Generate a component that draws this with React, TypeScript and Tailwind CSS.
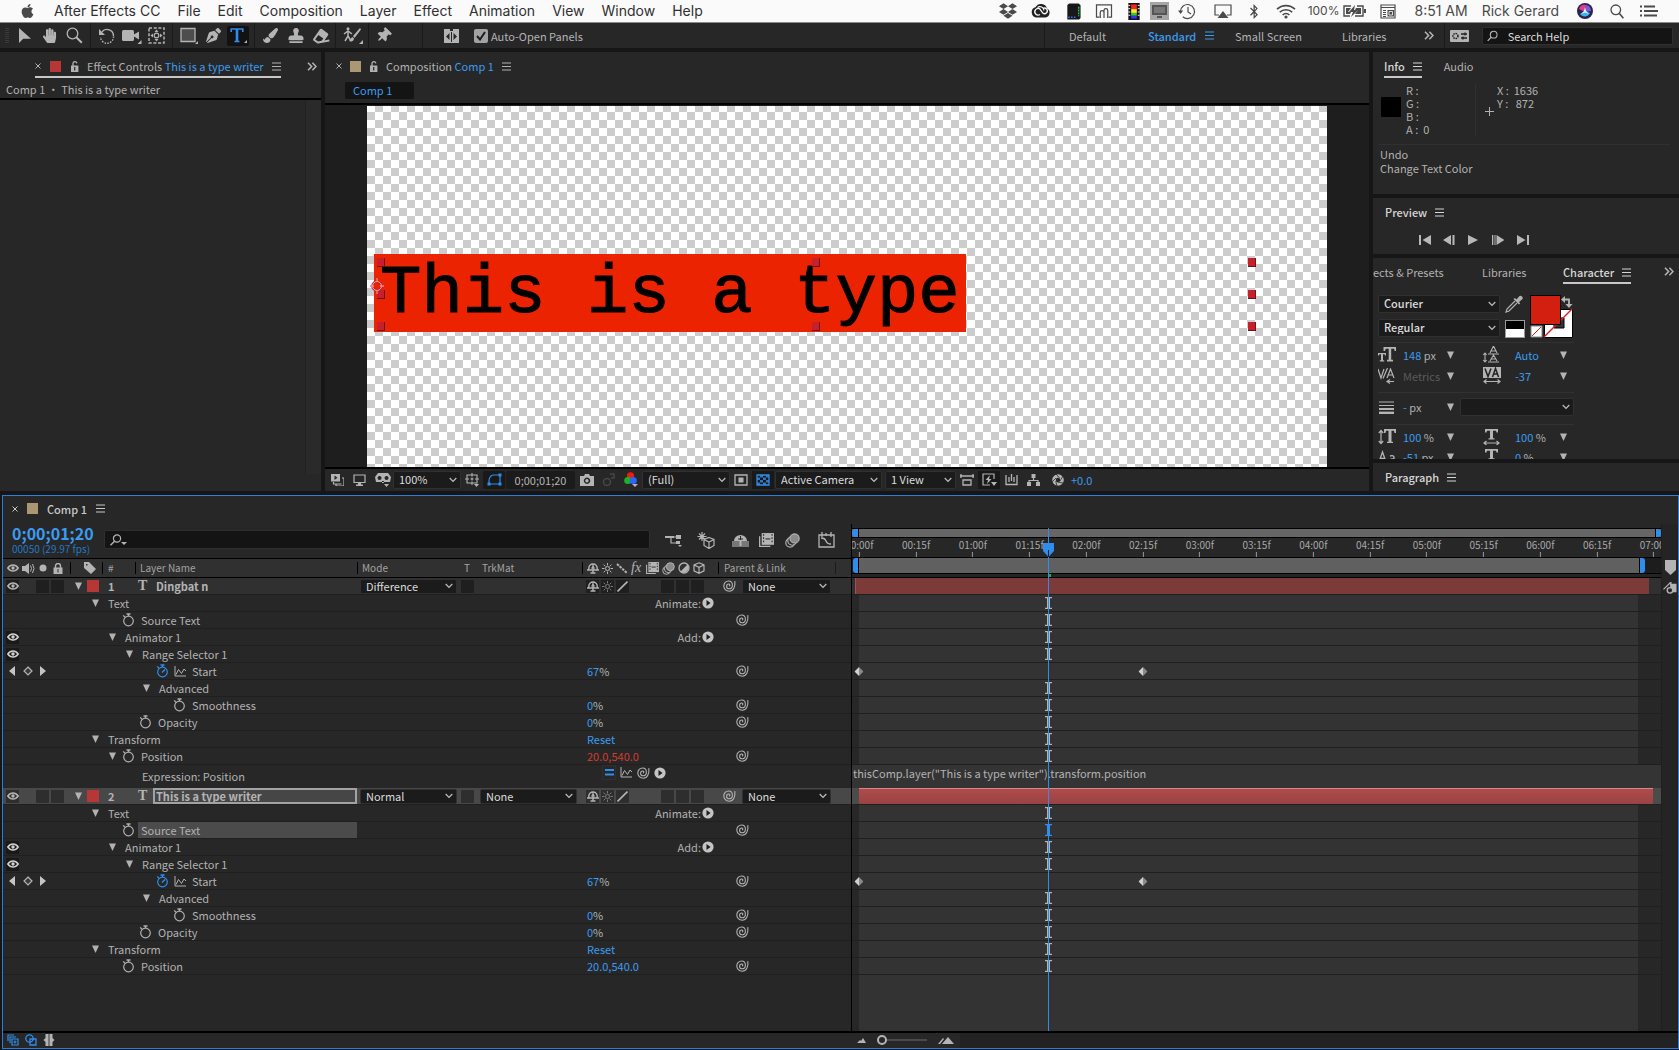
import { useState } from "react";
import type { ReactNode } from "react";
import clsx from "clsx";
import {
  FaApple,
  FaBluetoothB,
  FaDropbox,
  FaEraser,
  FaHandPaper,
  FaPaintBrush,
  FaPenNib,
  FaStamp,
  FaThumbtack,
} from "react-icons/fa";

type IconProps = { className?: string };

type Property = {
  name: string;
  level: number;
  open?: boolean;
  watch?: "off" | "on";
  eye?: boolean;
  value?: string;
  unit?: string;
  action?: string;
  pickWhip?: boolean;
  selected?: boolean;
  expression?: boolean;
  expressionRow?: boolean;
  beam?: boolean;
  keys?: number[];
};

const menus = [
  "File",
  "Edit",
  "Composition",
  "Layer",
  "Effect",
  "Animation",
  "View",
  "Window",
  "Help",
];

const baseProperties: Property[] = [
  { name: "Text", level: 0, open: true, action: "Animate:", beam: true },
  { name: "Source Text", level: 1, watch: "off", pickWhip: true, beam: true },
  { name: "Animator 1", level: 1, open: true, eye: true, action: "Add:", beam: true },
  { name: "Range Selector 1", level: 2, open: true, eye: true, beam: true },
  { name: "Start", level: 3, watch: "on", value: "67", unit: "%", pickWhip: true, keys: [0, 2.5] },
  { name: "Advanced", level: 3, open: true, beam: true },
  { name: "Smoothness", level: 4, watch: "off", value: "0", unit: "%", pickWhip: true, beam: true },
  { name: "Opacity", level: 2, watch: "off", value: "0", unit: "%", pickWhip: true, beam: true },
  { name: "Transform", level: 0, open: true, value: "Reset", beam: true },
];

const firstLayer: Property[] = [
  ...baseProperties,
  { name: "Position", level: 1, open: true, watch: "off", value: "20.0,540.0", expression: true, pickWhip: true, beam: true },
  { name: "Expression: Position", level: 2, expressionRow: true },
];

const secondLayer: Property[] = [
  ...baseProperties.map((p) =>
    p.name === "Source Text" ? { ...p, selected: true } : p
  ),
  { name: "Position", level: 1, watch: "off", value: "20.0,540.0", pickWhip: true, beam: true },
];

const indents = ["pl-[19px]", "pl-[36px]", "pl-[53px]", "pl-[70px]", "pl-[87px]"];

const ticks = [
  "00:00f", "00:15f", "01:00f", "01:15f", "02:00f", "02:15f", "03:00f", "03:15f",
  "04:00f", "04:15f", "05:00f", "05:15f", "06:00f", "06:15f", "07:00f",
];

const playhead = 1.66;

// seconds -> position on the time ruler
const at = (seconds: number) => `${0.9 + seconds * 14.03}%`;

const Hamburger = ({ className }: IconProps) => (
  <svg viewBox="0 0 9 9" className={clsx("h-[9px] w-[9px] shrink-0", className)}>
    <path d="M0 1h9M0 4.5h9M0 8h9" stroke="currentColor" strokeWidth="1.2" />
  </svg>
);

const Chevron = ({ className }: IconProps) => (
  <svg viewBox="0 0 8 6" className={clsx("h-[6px] w-[8px]", className)}>
    <path d="M.7 1 4 4.4 7.3 1" fill="none" stroke="currentColor" strokeWidth="1.3" />
  </svg>
);

const DoubleChevron = () => (
  <svg viewBox="0 0 10 9" className="h-[9px] w-[10px]">
    <path d="M1 .7 4.6 4.5 1 8.3M5.4.7 9 4.5 5.4 8.3" fill="none" stroke="currentColor" strokeWidth="1.6" />
  </svg>
);

const Cross = () => (
  <svg viewBox="0 0 6 6" className="h-[6px] w-[6px]">
    <path d="m.5.5 5 5m0-5-5 5" stroke="currentColor" strokeWidth="1" />
  </svg>
);

const Down = ({ className }: IconProps) => (
  <svg viewBox="0 0 7 8" className={clsx("h-[8px] w-[7px]", className)}>
    <path d="M0 .5h7L3.5 8z" fill="currentColor" />
  </svg>
);

const Lock = () => (
  <svg viewBox="0 0 9 11" className="h-[11px] w-[9px]">
    <path d="M3 5V2.8a1.9 1.9 0 0 1 3.8-.4" fill="none" stroke="currentColor" strokeWidth="1.3" />
    <path fillRule="evenodd" d="M1 4.6h7.4V11H1zM4.1 6v3.4h1.2V6z" fill="currentColor" />
  </svg>
);

const Eye = () => (
  <svg viewBox="0 0 12 8" className="h-[8px] w-[12px]">
    <path d="M.8 4Q3 1 6 1t5.200 3Q9 7 6 7T.8 4z" fill="none" stroke="currentColor" strokeWidth="1.500" />
    <circle cx="6" cy="4" r="1.700" fill="currentColor" />
  </svg>
);

const Spiral = ({ className }: IconProps) => (
  <svg viewBox="0 0 13 12" className={clsx("h-[12px] w-[13px] shrink-0", className)}>
    <path
      d="M11.800 1.200C12.600 6.500 10.300 11.200 6.200 11.200 3 11.200.8 9 .8 6S3 1 5.600 1s3.800 1.800 3.800 4.200S7.800 8.800 6 8.800 3.600 7.600 3.600 6.200 4.600 4 5.800 4 7 5 6.400 6.400"
      fill="none"
      stroke="currentColor"
      strokeWidth="1.100"
    />
  </svg>
);

const Stopwatch = ({ on }: { on: boolean }) => (
  <svg viewBox="0 0 13 14" className={clsx("h-[14px] w-[13px]", on ? "text-[#2f8dee]" : "text-[#b0b0b0]")}>
    <circle cx="6.500" cy="8" r="4.800" fill="none" stroke="currentColor" strokeWidth="1.200" />
    <path d="M4.500 1h4M6.500 1v2M1.200 2.400l1.800 1.800" stroke="currentColor" strokeWidth="1.300" />
    {on && <path d="m6 8.600 3-3.200" stroke="currentColor" strokeWidth="1.400" />}
  </svg>
);

const Graph = () => (
  <svg viewBox="0 0 12 11" className="h-[11px] w-[12px]">
    <path d="M1 0v10h11M2 8.500l2.500-5 3 4L10 3l2 2" fill="none" stroke="currentColor" strokeWidth="1" />
  </svg>
);

const CirclePlay = () => (
  <svg viewBox="0 0 12 12" className="h-[12px] w-[12px]">
    <circle cx="6" cy="6" r="5.600" fill="#c4c4c4" />
    <path d="M4.500 3v6l4-3z" fill="#1c1c1c" />
  </svg>
);

const Shy = () => (
  <svg viewBox="0 0 12 11" className="h-[11px] w-[12px]">
    <path d="M0 7h12M6 3v7.500M3.500 10h5M1.800 7V5.200a4.200 4.200 0 0 1 8.400 0V7" fill="none" stroke="currentColor" strokeWidth="1.400" />
    <path d="M6 1v4M4 5h4" stroke="currentColor" strokeWidth="1.200" />
  </svg>
);

const Sun = ({ className }: IconProps) => (
  <svg viewBox="0 0 11 11" className={clsx("h-[11px] w-[11px]", className)}>
    <circle cx="5.500" cy="5.500" r="2" fill="none" stroke="currentColor" />
    <path d="M5.500 0v2.500m0 6V11M0 5.500h2.500m6 0H11M1.600 1.600l1.800 1.800m4.200 4.200 1.800 1.800m0-7.800L7.600 3.400M3.400 7.600 1.600 9.400" stroke="currentColor" />
  </svg>
);

const Cube = ({ className }: IconProps) => (
  <svg viewBox="0 0 12 12" className={clsx("h-[12px] w-[12px]", className)}>
    <path d="M6 .8 11 3v5.800L6 11.300 1 8.800V3zM1 3l5 2.400L11 3M6 5.400v5.900" fill="none" stroke="currentColor" strokeWidth="1.200" />
  </svg>
);

const Film = ({ className }: IconProps) => (
  <svg viewBox="0 0 14 13" className={clsx("h-[12px] w-[13px]", className)}>
    <path d="M.6 3v9.400h10" fill="none" stroke="currentColor" strokeWidth="1.200" />
    <path d="M2.500 0H14v11H2.500z" fill="currentColor" />
    <path d="M4.300 1v9M12.200 1v9" stroke="#2a2a2a" strokeWidth="1" strokeDasharray="1.500 1.500" />
    <path d="M6 5.500h4.500" stroke="#2a2a2a" strokeWidth="1" />
  </svg>
);

const Blur = ({ className }: IconProps) => (
  <svg viewBox="0 0 13 13" className={clsx("h-[13px] w-[13px]", className)}>
    <circle cx="4.500" cy="8.500" r="3.800" fill="none" stroke="currentColor" />
    <circle cx="6.200" cy="6.800" r="3.800" fill="#2f2f2f" stroke="currentColor" />
    <circle cx="8.300" cy="4.700" r="4" fill="#8a8a8a" stroke="currentColor" />
  </svg>
);

const Swatch = ({ className }: IconProps) => (
  <span className={clsx("h-[11px] w-[11px] shrink-0", className)} />
);

const Separator = ({ className }: IconProps) => (
  <span className={clsx("w-px self-stretch bg-[#1a1a1a]", className)} />
);

type DropdownProps = {
  label: string;
  value: string;
  className?: string;
};

function Dropdown({ label, value, className }: DropdownProps) {
  return (
    <span className={clsx("relative block", className)}>
      <select
        aria-label={label}
        defaultValue={value}
        className="block h-full w-full appearance-none rounded-[2px] border border-[#303030] bg-[#1b1b1b] pb-px pl-[5px] pr-5 text-[#dcdcdc] leading-[13px] outline-none"
      >
        <option value={value}>{value}</option>
      </select>
      <Chevron className="pointer-events-none absolute top-1/2 right-[4px] -translate-y-1/2 text-[#b8b8b8]" />
    </span>
  );
}

function IconButton({ label, className, children }: { label: string; className?: string; children?: ReactNode }) {
  return (
    <button type="button" aria-label={label} className={clsx("flex shrink-0 items-center justify-center", className)}>
      {children}
    </button>
  );
}

function MenuBar() {
  return (
    <header className="flex h-[23px] items-center justify-between border-b border-[#8a8a8a] bg-[#fafafa] pl-[20px] pr-[21px] font-[Inter,sans-serif] text-[14px] leading-[20px] text-[#303030]">
      <nav className="flex items-center gap-[17px]">
        <FaApple className="mr-[2px] h-[16px] w-[15px] text-[#4a4a4a]" />
        <button type="button">After Effects CC</button>
        {menus.map((menu) => (
          <button type="button" key={menu}>{menu}</button>
        ))}
      </nav>
      <div className="flex items-center gap-[14px] text-[#4a4a4a]">
        <FaDropbox className="h-[18px] w-[18px]" />
        <svg viewBox="0 0 20 16" className="h-[16px] w-[20px]">
          <path d="M6 14.500A5.200 5.200 0 0 1 4.500 4.300 6.200 6.200 0 0 1 16 5.500a4.800 4.800 0 0 1-1.500 9z" fill="#222" />
          <path d="M9 11.500a3.300 3.300 0 1 1-.2-5.600l3 4.200a2.800 2.800 0 1 0 .2-4.600" fill="none" stroke="#fff" strokeWidth="1.300" />
          <path d="M6.500 4.500a4 4 0 0 1 6.500 3" fill="none" stroke="#fff" strokeWidth="1.100" />
        </svg>
        <svg viewBox="0 0 16 18" className="h-[17px] w-[16px]">
          <path d="M2 2 4 .5h10l2 2V16l-1.500 1.500H2z" fill="#16181a" />
          <path d="M3 15h1.500M6 15h1.500M9 15h1.500" stroke="#3c7bff" strokeWidth="1.500" />
          <path d="M14 4v10" stroke="#39c53c" strokeWidth="1.500" strokeDasharray="2 1" />
        </svg>
        <svg viewBox="0 0 18 16" className="h-[15px] w-[18px]">
          <path d="M4 14H1V1h16v13h-3M5 15V9a2 2 0 0 1 4 0v6m0-6V7a2 2 0 0 1 4 0v8" fill="none" stroke="currentColor" strokeWidth="1.300" />
        </svg>
        <svg viewBox="0 0 14 18" className="h-[17px] w-[14px]">
          <path d="M1 0h12v18H1z" fill="#111" />
          <path d="M1 2.500h2M1 6h2M1 9.500h2M1 13h2M11 2.500h2M11 6h2M11 9.500h2M11 13h2" stroke="#fff" />
          <path d="M4 1.500h6v5H4z" fill="#f22" />
          <path d="M4 6.500h6v4H4z" fill="#fe2" />
          <path d="M4 10.500h6v3H4z" fill="#3c3" />
          <path d="M4 13.500h6v3H4z" fill="#33f" />
        </svg>
        <span className="-mx-[5px] flex h-[18px] w-[19px] items-center justify-center bg-[#a5a5a5]">
          <svg viewBox="0 0 15 13" className="h-[13px] w-[15px]">
            <path d="M0 0h15v10H0zM5 11h5v2H5z" fill="#555" />
            <path d="M2 2h11v6H2z" fill="#777" />
          </svg>
        </span>
        <svg viewBox="0 0 18 17" className="h-[17px] w-[18px]">
          <path d="M2.500 8.500a7 7 0 1 1 2.300 5.200M10 4v5l3 2" fill="none" stroke="currentColor" strokeWidth="1.200" />
          <path d="M0 7.500h5.200L2.600 11z" fill="currentColor" />
        </svg>
        <svg viewBox="0 0 18 15" className="ml-[4px] h-[15px] w-[18px]">
          <path d="M5 11H1V1h16v10h-4" fill="none" stroke="currentColor" strokeWidth="1.200" />
          <path d="m9 7 5.500 7h-11z" fill="currentColor" />
        </svg>
        <FaBluetoothB className="h-[15px] w-[16px]" />
        <svg viewBox="0 0 20 15" className="h-[15px] w-[20px]">
          <path d="M1 5.200a13 13 0 0 1 18 0M3.800 8.200a9 9 0 0 1 12.400 0M6.600 11a5 5 0 0 1 6.800 0" fill="none" stroke="currentColor" strokeWidth="1.600" />
          <circle cx="10" cy="13" r="1.600" fill="currentColor" />
        </svg>
        <span className="-ml-[2px] flex items-center gap-[4px] text-[12px]">
          100%
          <svg viewBox="0 0 23 12" className="h-[12px] w-[23px]">
            <path d="M8 1H1v10h6m5 0h8V1h-6" fill="none" stroke="currentColor" strokeWidth="1.400" />
            <path d="M3 3h5l-3 4h3l-1 2H3zm10 0h5v6h-6l3-4h-3zM21 4h2v4h-2zM12 0 6 7h4L8 12l7-7h-4z" fill="currentColor" />
          </svg>
        </span>
        <svg viewBox="0 0 16 15" className="h-[15px] w-[16px]">
          <path d="M1 1h14v13H1zM1 3.500h14" fill="none" stroke="currentColor" strokeWidth="1.200" />
          <path d="M3 6h3v1H3zm0 2h3v1H3zm0 2h3v1H3zm0 2h3v1H3zm4.500-6H14v6.500H7.500z" fill="currentColor" />
          <path d="M9 7.500h3.500V11H9z" fill="none" stroke="#fff" strokeWidth=".8" />
        </svg>
        <span className="ml-[4px]">8:51 AM</span>
        <span>Rick Gerard</span>
        <svg viewBox="0 0 16 16" className="ml-[4px] h-[16px] w-[16px]">
          <circle cx="8" cy="8" r="8" fill="#2b2350" />
          <path d="M2 6a6.200 6.200 0 0 1 7-4L8 9z" fill="#e13c8d" />
          <path d="M9 2a6.200 6.200 0 0 1 5 6L8 9z" fill="#7d5bd8" />
          <path d="M3 11c2 3.500 8 3.500 10-1L8 8z" fill="#35b5e8" />
          <path d="m8 4 1 4 3 3-4-1.500L4 11l3-3z" fill="#e8f4ff" />
        </svg>
        <svg viewBox="0 0 14 15" className="ml-[3px] h-[15px] w-[14px]">
          <circle cx="5.800" cy="5.800" r="4.800" fill="none" stroke="currentColor" strokeWidth="1.300" />
          <path d="m9.200 9.200 4.200 5" stroke="currentColor" strokeWidth="1.600" />
        </svg>
        <svg viewBox="0 0 18 12" className="ml-[2px] h-[12px] w-[18px]">
          <path d="M0 1.500h2M4 1.500h11M0 6h2M4 6h14M0 10.500h2M4 10.500h13" stroke="currentColor" strokeWidth="1.800" />
        </svg>
      </div>
    </header>
  );
}

function ToolBar() {
  const [autoOpen, setAutoOpen] = useState(true);

  return (
    <div className="flex h-[25px] items-center justify-between bg-[#272727] pl-[5px] pr-[6px] text-[#b4b4b4]">
      <div className="flex h-full items-center">
        <span className="h-[16px] w-[4px] bg-[repeating-linear-gradient(#3c3c3c_0_1px,#232323_1px_2px)]" />
        <div className="ml-[3px] flex items-center">
          <IconButton label="Selection" className="w-[25px]">
            <svg viewBox="0 0 13 15" className="h-[15px] w-[13px]">
              <path d="M1 0v15l4.200-4.300H13z" fill="currentColor" />
            </svg>
          </IconButton>
          <IconButton label="Hand" className="w-[25px]"><FaHandPaper className="h-[15px] w-[15px]" /></IconButton>
          <IconButton label="Zoom" className="w-[25px]">
            <svg viewBox="0 0 17 17" className="h-[17px] w-[17px]">
              <circle cx="6.500" cy="6.500" r="5.300" fill="none" stroke="currentColor" strokeWidth="1.300" />
              <path d="m10.300 10.300 5.500 5.500" stroke="currentColor" strokeWidth="2" />
            </svg>
          </IconButton>
        </div>
        <Separator className="mx-[3px]" />
        <div className="flex items-center">
          <IconButton label="Rotation" className="w-[25px]">
            <svg viewBox="0 0 16 16" className="h-[16px] w-[16px]">
              <path d="M3 3.800A6.500 6.500 0 0 1 14.500 8" fill="none" stroke="currentColor" strokeWidth="1.400" />
              <path d="M14.500 8.500a6.500 6.500 0 0 1-13 .5" fill="none" stroke="currentColor" strokeWidth="1.400" strokeDasharray="1.500 1.300" />
              <path d="M0 1v6h6z" fill="currentColor" />
            </svg>
          </IconButton>
          <IconButton label="Unified Camera" className="w-[25px]">
            <svg viewBox="0 0 20 16" className="h-[16px] w-[20px]">
              <rect x="0" y="2" width="12" height="11" rx="1.500" fill="currentColor" />
              <path d="m11 7 6-3.500v8L11 8zM19.500 12v4h-4z" fill="currentColor" />
            </svg>
          </IconButton>
          <IconButton label="Pan Behind" className="w-[25px]">
            <svg viewBox="0 0 17 17" className="h-[17px] w-[17px]">
              <rect x="1" y="1" width="15" height="15" fill="none" stroke="currentColor" strokeWidth="1.500" strokeDasharray="3 1.700" />
              <circle cx="8.500" cy="8.500" r="2.300" fill="none" stroke="currentColor" strokeWidth="1.200" />
              <path d="M8.500 2.500 10.500 5h-4zM8.500 14.500l2-2.500h-4zM2.500 8.500 5 6.500v4zM14.500 8.500 12 6.500v4z" fill="currentColor" />
            </svg>
          </IconButton>
        </div>
        <Separator className="mx-[3px]" />
        <div className="flex items-center">
          <IconButton label="Rectangle" className="w-[25px]">
            <svg viewBox="0 0 18 17" className="h-[17px] w-[18px]">
              <path d="M1 1.500h14v13H1z" fill="#4d4d4d" stroke="currentColor" strokeWidth="1.300" />
              <path d="M18 14v3h-3z" fill="currentColor" />
            </svg>
          </IconButton>
          <IconButton label="Pen" className="w-[25px]"><FaPenNib className="h-[15px] w-[15px]" /></IconButton>
          <IconButton label="Type" className="ml-px h-[20px] w-[22px] rounded-[2px] bg-[#121212] text-[#2f8dee]">
            <svg viewBox="0 0 18 17" className="h-[17px] w-[18px]">
              <path d="M1.500 2h13M2.200 2v3M13.800 2v3M5.500 14.500h5" stroke="currentColor" strokeWidth="1.600" />
              <path d="M8 2v12.500" stroke="currentColor" strokeWidth="2.600" />
              <path d="M18 13v3h-3z" fill="#b4b4b4" />
            </svg>
          </IconButton>
        </div>
        <Separator className="mr-[3px] ml-[5px]" />
        <div className="flex items-center">
          <IconButton label="Brush" className="w-[25px]"><FaPaintBrush className="h-[15px] w-[15px]" /></IconButton>
          <IconButton label="Clone Stamp" className="w-[25px]"><FaStamp className="h-[15px] w-[16px]" /></IconButton>
          <IconButton label="Eraser" className="w-[25px]"><FaEraser className="h-[16px] w-[17px] -rotate-[10deg]" /></IconButton>
        </div>
        <Separator className="mr-[4px] ml-[2px]" />
        <IconButton label="Roto Brush" className="w-[26px]">
          <svg viewBox="0 0 20 17" className="h-[17px] w-[20px]">
            <path d="M1 7 5 4l4 3M5 4v5l3 5M5 9l-3 5" fill="none" stroke="currentColor" strokeWidth="1.500" />
            <circle cx="5" cy="1.800" r="1.500" fill="currentColor" />
            <path d="m17 1-7 8 1.500 2L18 2.500zM9.500 10c-2 .5-1.500 3-3.500 4 2 1 5 .5 5-2.500zM20 13v4h-4z" fill="currentColor" />
          </svg>
        </IconButton>
        <Separator className="mx-[2px]" />
        <IconButton label="Puppet Pin" className="w-[24px]"><FaThumbtack className="h-[15px] w-[15px] rotate-45" /></IconButton>
        <Separator className="mr-[21px] ml-[27px]" />
        <IconButton label="Snapping" className="w-[15px]">
          <svg viewBox="0 0 15 15" className="h-[15px] w-[15px]">
            <path fillRule="evenodd" d="M0 1h6v2h3V1h6v14H0zM5.500 5 2 8.500 5.500 12zM9.500 5v7L13 8.500zM7 4v10h1V4z" fill="currentColor" />
          </svg>
        </IconButton>
        <label className="relative ml-[15px] flex items-center gap-[3px]">
          <input
            type="checkbox"
            checked={autoOpen}
            onChange={(e) => setAutoOpen(e.target.checked)}
            className="h-[14px] w-[14px] appearance-none rounded-[2px] bg-[#a2a2a2]"
          />
          {autoOpen && (
            <svg viewBox="0 0 10 10" className="pointer-events-none absolute left-[2px] h-[10px] w-[10px]">
              <path d="m1 5 3 3.500L9 1" fill="none" stroke="#1d1d1d" strokeWidth="2" />
            </svg>
          )}
          Auto-Open Panels
        </label>
      </div>

      <div className="flex h-full items-center">
        <Separator />
        <button type="button" className="ml-[24px] w-[79px] text-left">Default</button>
        <button type="button" className="flex w-[87px] items-center gap-[9px] font-medium text-[#3b9cf0]">
          Standard
          <Hamburger />
        </button>
        <button type="button" className="w-[107px] text-left">Small Screen</button>
        <button type="button" className="w-[82px] text-left">Libraries</button>
        <IconButton label="More workspaces"><DoubleChevron /></IconButton>
        <Separator className="mr-[5px] ml-[10px]" />
        <IconButton label="Workspace settings">
          <svg viewBox="0 0 19 12" className="h-[12px] w-[19px]">
            <rect width="19" height="12" rx="1" fill="currentColor" />
            <circle cx="5.500" cy="6" r="2.500" fill="none" stroke="#222" strokeWidth="1.500" strokeDasharray="1.500 .8" />
            <path d="M11 4h6M11 8h6M15 2.500v3M13 6.500v3" stroke="#222" strokeWidth="1.300" />
          </svg>
        </IconButton>
        <label className="ml-[13px] flex h-[18px] w-[191px] items-center rounded-[2px] border border-[#303030] bg-[#141414] pl-[4px]">
          <svg viewBox="0 0 12 12" className="h-[12px] w-[12px]">
            <circle cx="7.500" cy="4.500" r="3.800" fill="none" stroke="currentColor" strokeWidth="1.200" />
            <path d="M4.800 7.300.8 11.500" stroke="currentColor" strokeWidth="1.500" />
          </svg>
          <input
            aria-label="Search Help"
            placeholder="Search Help"
            className="ml-[10px] w-full bg-transparent text-[#dcdcdc] outline-none placeholder:text-[#dcdcdc]"
          />
        </label>
      </div>
    </div>
  );
}

function EffectControls() {
  return (
    <section className="flex w-[321px] shrink-0 flex-col bg-[#272727]">
      <div className="flex h-[29px] items-start justify-between pr-[4px] pl-[35px]">
        <div className="flex h-[26px] items-center gap-[8px] border-b-2 border-[#c8c8c8] pt-[4px]">
          <span className="flex items-center gap-[9px]">
            <Cross />
            <Swatch className="bg-[#b73636]" />
            <Lock />
          </span>
          <h2 className="whitespace-nowrap">
            Effect Controls <span className="text-[#3b9cf0]">This is a type writer</span>
          </h2>
          <Hamburger />
        </div>
        <span className="mt-[10px]"><DoubleChevron /></span>
      </div>
      <p className="h-[19px] border-b-2 border-black pl-[6px] leading-[17px]">Comp 1 • This is a type writer</p>
      <div className="flex flex-1 justify-end pb-[17px]">
        <div className="w-[16px] border-l border-[#222] bg-[#2a2a2a]" />
      </div>
    </section>
  );
}

function Handle({ className }: IconProps) {
  return <span className={clsx("absolute h-[9px] w-[8px] border-r border-b border-[#6e1414] bg-[#c6202f]", className)} />;
}

function Composition() {
  return (
    <section className="flex min-w-0 flex-1 flex-col bg-[#272727]">
      <div className="flex h-[28px] items-center gap-[8px] pl-[11px]">
        <Cross />
        <Swatch className="bg-[#ab9873]" />
        <Lock />
        <h2>
          Composition <span className="text-[#3b9cf0]">Comp 1</span>
        </h2>
        <Hamburger />
      </div>
      <div className="flex h-[25px] items-center border-b-2 border-black pb-[2px] pl-[20px]">
        <button type="button" className="h-[17px] w-[69px] rounded-[2px] bg-[#141414] pl-[8px] text-left leading-[15px] text-[#3b9cf0]">
          Comp 1
        </button>
      </div>
      <div className="flex h-[362px] justify-center overflow-hidden bg-[#1e1e1e] pt-px">
        <div className="relative w-[960px] bg-[conic-gradient(#ccc_25%,#fff_0_50%,#ccc_0_75%,#fff_0)] bg-[length:16px_16px] bg-[position:0_-2px]">
          <div className="absolute top-[148px] left-[7px] h-[78px] w-[592px] bg-[#eb2300] pl-[6px] font-['Liberation_Mono',monospace] text-[69px] leading-[81px] whitespace-pre text-black [-webkit-text-stroke:1px_black]">
            This is a type
          </div>
          <Handle className="top-[152px] left-[10px]" />
          <Handle className="top-[184px] left-[10px]" />
          <Handle className="top-[216px] left-[10px]" />
          <Handle className="top-[152px] left-[445px]" />
          <Handle className="top-[216px] left-[445px]" />
          <Handle className="top-[152px] left-[881px]" />
          <Handle className="top-[184px] left-[881px]" />
          <Handle className="top-[216px] left-[881px]" />
          <svg viewBox="0 0 16 18" className="absolute top-[171px] left-[2px] h-[18px] w-[16px]">
            <circle cx="8" cy="9" r="4.500" fill="none" stroke="#c6202f" strokeWidth="2.500" />
            <circle cx="8" cy="9" r="4.500" fill="none" stroke="#f2b0b0" />
            <path d="M8 1v4M8 13v4M1 9h4M11 9h4" stroke="#e88" strokeWidth="1.300" />
          </svg>
        </div>
      </div>
      <div className="flex h-[24px] items-center border-t-2 border-black pb-px pl-[6px] text-[#b4b4b4]">
        <IconButton label="Always preview" className="w-[22px] justify-start">
          <svg viewBox="0 0 13 12" className="h-[12px] w-[13px]">
            <path d="M2.500 8v2h8M5 10v2h8V4h-2" fill="none" stroke="currentColor" strokeWidth="1.200" />
            <path fillRule="evenodd" d="M0 0h9v7.500H0zM3.500 1.500v4.500l3-2.200z" fill="currentColor" />
          </svg>
        </IconButton>
        <IconButton label="Main view" className="w-[22px] justify-start">
          <svg viewBox="0 0 13 12" className="h-[12px] w-[13px]">
            <path d="M1 1h11v7.500H1z" fill="none" stroke="currentColor" strokeWidth="1.200" />
            <path d="M5 9h3v1.500h2V12H3v-1.500h2z" fill="currentColor" />
          </svg>
        </IconButton>
        <IconButton label="Immersive" className="w-[18px] justify-start">
          <svg viewBox="0 0 16 14" className="h-[14px] w-[16px]">
            <path fillRule="evenodd" d="M3 0h10l3 4-1 5H1L0 4zM4.500 3a2 2 0 1 0 .1 0zM11.500 3a2 2 0 1 0 .1 0zM7 8h2v2H7z" fill="currentColor" />
            <path d="M9 11h5l-2.500 3z" fill="currentColor" />
          </svg>
        </IconButton>
        <Dropdown label="Magnification" value="100%" className="h-[18px] w-[68px]" />
        <IconButton label="Grid and guides" className="w-[22px]">
          <svg viewBox="0 0 15 14" className="h-[14px] w-[15px]">
            <path d="M2 2h10v8H2zM7 0v3.500M7 8.500V12M0 6h4M10 6h4M5.500 6h3M7 4.500v3" fill="none" stroke="currentColor" strokeWidth="1.100" />
            <path d="M9 11h5l-2.500 3z" fill="currentColor" />
          </svg>
        </IconButton>
        <IconButton label="Mask visibility" className="h-[18px] w-[22px] rounded-[2px] bg-[#191919] text-[#2f8dee]">
          <svg viewBox="0 0 15 13" className="h-[13px] w-[15px]">
            <path d="M2 11V7q1-5 5-5h6v9z" fill="none" stroke="currentColor" strokeWidth="1.200" />
            <path d="M.5 9.500h3v3h-3zM11.500 9.500h3v3h-3zM11.500.5h3v3h-3z" fill="currentColor" />
          </svg>
        </IconButton>
        <button type="button" className="mx-px h-[18px] w-[69px] rounded-[2px] bg-[#1b1b1b]">0;00;01;20</button>
        <IconButton label="Take snapshot" className="w-[22px]">
          <svg viewBox="0 0 14 12" className="h-[12px] w-[14px]">
            <path fillRule="evenodd" d="M0 2h4l1-2h4l1 2h4v10H0zM7 3.500a3.200 3.200 0 1 0 .1 0zM7 5a1.700 1.700 0 1 1-.1 0z" fill="currentColor" />
          </svg>
        </IconButton>
        <IconButton label="Show snapshot" className="w-[22px] text-[#474747]">
          <svg viewBox="0 0 14 14" className="h-[14px] w-[14px]">
            <circle cx="5" cy="9" r="3.500" fill="none" stroke="currentColor" strokeWidth="1.500" />
            <path d="M8 1h4v4H9" fill="none" stroke="currentColor" strokeWidth="1.500" />
          </svg>
        </IconButton>
        <IconButton label="Channels" className="w-[22px]">
          <svg viewBox="0 0 14 15" className="h-[15px] w-[14px]">
            <circle cx="6.500" cy="3.800" r="3.600" fill="#f21b0c" />
            <circle cx="3.800" cy="8.500" r="3.600" fill="#19b526" />
            <circle cx="9.200" cy="8.500" r="3.600" fill="#2f62ff" />
            <path d="M8 12h6l-3 3z" fill="currentColor" />
          </svg>
        </IconButton>
        <Dropdown label="Resolution" value="(Full)" className="h-[18px] w-[88px]" />
        <IconButton label="Region of interest" className="w-[22px]">
          <svg viewBox="0 0 14 12" className="h-[12px] w-[14px]">
            <path d="M1 1h12v10H1z" fill="none" stroke="currentColor" strokeWidth="1.300" />
            <path d="M4.500 3.500h5v5h-5z" fill="currentColor" />
          </svg>
        </IconButton>
        <IconButton label="Transparency grid" className="h-[18px] w-[22px] bg-[#191919] text-[#2f8dee]">
          <svg viewBox="0 0 14 12" className="h-[12px] w-[14px]">
            <path d="M1 1h12v10H1z" fill="none" stroke="currentColor" strokeWidth="1.300" />
            <path d="M4 1h3v2.500H4zM10 1h3v2.500h-3zM1 3.500h3V6H1zM7 3.500h3V6H7zM4 6h3v2.500H4zM10 6h3v2.500h-3zM1 8.500h3V11H1zM7 8.500h3V11H7z" fill="currentColor" opacity=".8" />
          </svg>
        </IconButton>
        <Dropdown label="3D view" value="Active Camera" className="ml-px h-[18px] w-[107px]" />
        <Dropdown label="View layout" value="1 View" className="ml-[3px] h-[18px] w-[71px]" />
        <IconButton label="Pixel aspect ratio" className="w-[22px]">
          <svg viewBox="0 0 14 12" className="h-[12px] w-[14px]">
            <path d="M0 2h14M3 6h8v5H3zM1 0v4M13 0v4" fill="none" stroke="currentColor" strokeWidth="1.300" />
          </svg>
        </IconButton>
        <IconButton label="Fast previews" className="h-[18px] w-[22px] bg-[#191919]">
          <svg viewBox="0 0 15 14" className="h-[14px] w-[15px]">
            <path d="M12 6V1H1v11h7" fill="none" stroke="currentColor" strokeWidth="1.200" />
            <path d="M8 2 3.500 7H6l-1 4 4.500-5H7zM9 9h6l-3 4z" fill="currentColor" />
          </svg>
        </IconButton>
        <IconButton label="Timeline" className="w-[22px]">
          <svg viewBox="0 0 13 12" className="h-[12px] w-[13px]">
            <path d="M1 1v9.500h11V1M6.500 0v7M4 3v5M9 3v5" fill="none" stroke="currentColor" strokeWidth="1.300" />
          </svg>
        </IconButton>
        <IconButton label="Flowchart" className="w-[22px]">
          <svg viewBox="0 0 13 12" className="h-[12px] w-[13px]">
            <path d="M4.500 0h4v4h-4zM0 8h4v4H0zM9 8h4v4H9z" fill="currentColor" />
            <path d="M6.500 4v2.500M2 8V6.500h9V8" fill="none" stroke="currentColor" strokeWidth="1.200" />
          </svg>
        </IconButton>
        <IconButton label="Exposure" className="ml-[3px] w-[22px]">
          <svg viewBox="0 0 12 12" className="h-[12px] w-[12px]">
            <circle cx="6" cy="6" r="4" fill="none" stroke="currentColor" strokeWidth="3.600" />
            <path d="m4 0 3.500 4M11 2 8 7M11 9l-5.500-1M5 12 3.700 7M0 8l4-4" stroke="#272727" strokeWidth=".8" />
          </svg>
        </IconButton>
        <button type="button" className="ml-[2px] text-[#3b9cf0]">+0.0</button>
      </div>
    </section>
  );
}

function InfoPanel() {
  return (
    <section className="h-[142px] bg-[#272727]">
      <div className="flex gap-[22px] pl-[11px]">
        <button type="button" className="flex h-[26px] items-center gap-[8px] border-b-2 border-[#c8c8c8] pt-[4px] font-medium text-[#d6d6d6]">
          Info <Hamburger />
        </button>
        <button type="button" className="h-[26px] pt-[2px]">Audio</button>
      </div>
      <div className="flex h-[66px] pt-[6px] pl-[8px] leading-[13px]">
        <span className="mt-[13px] h-[20px] w-[20px] bg-black" />
        <div className="ml-[5px] h-[52px] w-[70px] border-r border-[#303030]">
          <p>R :</p>
          <p>G :</p>
          <p>B :</p>
          <p className="whitespace-pre">A :  0</p>
        </div>
        <svg viewBox="0 0 9 9" className="mt-[23px] ml-[9px] h-[9px] w-[9px]">
          <path d="M4.500 0v9M0 4.500h9" stroke="currentColor" />
        </svg>
        <div className="ml-[3px] whitespace-pre">
          <p>X :  1636</p>
          <p>Y :   872</p>
        </div>
      </div>
      <div className="mr-[9px] ml-[6px] border-t border-[#303030] pt-[2px] pl-px leading-[14px]">
        <p>Undo</p>
        <p>Change Text Color</p>
      </div>
    </section>
  );
}

function PreviewPanel() {
  return (
    <section className="h-[56px] bg-[#272727] text-[#b8b8b8]">
      <h2 className="flex h-[28px] items-center gap-[8px] pl-[12px] font-medium text-[#d6d6d6]">
        Preview <Hamburger />
      </h2>
      <div className="flex gap-[2px] pt-[9px] pl-[41px]">
        <IconButton label="First frame" className="w-[22px]">
          <svg viewBox="0 0 12 10" className="h-[10px] w-[12px]"><path d="M0 0h2v10H0zM12 0v10L3.500 5z" fill="currentColor" /></svg>
        </IconButton>
        <IconButton label="Previous frame" className="w-[22px]">
          <svg viewBox="0 0 12 10" className="h-[10px] w-[12px]"><path d="M8 0v10L0 5zM9.500 0h2v10h-2z" fill="currentColor" /></svg>
        </IconButton>
        <IconButton label="Play" className="w-[22px]">
          <svg viewBox="0 0 10 10" className="h-[10px] w-[10px]"><path d="M0 0v10l10-5z" fill="currentColor" /></svg>
        </IconButton>
        <IconButton label="Next frame" className="w-[24px]">
          <svg viewBox="0 0 12 10" className="h-[10px] w-[12px]"><path d="M0 0h1.300v10H0zM2.500 0h1v10h-1zM4.500 0v10l8-5z" fill="currentColor" /></svg>
        </IconButton>
        <IconButton label="Last frame" className="w-[22px]">
          <svg viewBox="0 0 12 10" className="h-[10px] w-[12px]"><path d="M10 0h2v10h-2zM0 0v10l8.500-5z" fill="currentColor" /></svg>
        </IconButton>
      </div>
    </section>
  );
}

function TypeIcon({ kind }: { kind: string }) {
  if (kind === "size")
    return (
      <svg viewBox="0 0 18 15" className="h-[15px] w-[18px]">
        <path d="M0 6h8v2.500H7l-.4-1.200H5v6h1.200V14.500h-4.400v-1.200H3v-6H1.400L1 8.500H0z" fill="currentColor" />
        <path d="M5.500 0H18v4h-1.300L16 1.800h-2.800v11H15v1.700H9v-1.700h1.700v-11H7.800L7 4H5.500z" fill="currentColor" />
      </svg>
    );
  if (kind === "baseline")
    return (
      <svg viewBox="0 0 17 14" className="h-[14px] w-[17px]">
        <path d="m1 12 3.500-10L8 12M2.500 8.500h4M12 6q4-1 4 1.500V12M16 9q-4-.5-4 1.500t4 0" fill="none" stroke="currentColor" strokeWidth="1.300" />
      </svg>
    );
  if (kind === "kerning")
    return (
      <svg viewBox="0 0 17 16" className="h-[16px] w-[17px]">
        <path d="m0 1 3 9 3-9M5 10.500 9.500 0M9 10l3.500-9L16 10M10.500 7h4M9.500 13.500H16M12 11.500l-3 2 3 2" fill="none" stroke="currentColor" strokeWidth="1.200" />
      </svg>
    );
  if (kind === "leading")
    return (
      <svg viewBox="0 0 17 17" className="h-[17px] w-[17px]">
        <path d="m7 7 3.500-7L14 7M8.500 5h4M5 8h11M7 15l3.500-6L14 15M8.500 13h4M5 16h11M2 7v8M.3 9 2 7l1.700 2M.3 14 2 16l1.700-2" fill="none" stroke="currentColor" strokeWidth="1.100" />
      </svg>
    );
  if (kind === "tracking")
    return (
      <svg viewBox="0 0 18 17" className="h-[17px] w-[18px]">
        <path d="M0 0h18v11H0z" fill="currentColor" />
        <path d="m2 1.500 3 8 3-8M9.500 10l3-8.500 3 8.500M10.500 7h4" fill="none" stroke="#222" strokeWidth="1.500" />
        <path d="M1 14.500h16M3.500 12.500l-2.500 2 2.500 2M14.500 12.500l2.500 2-2.500 2" fill="none" stroke="currentColor" strokeWidth="1.200" />
      </svg>
    );
  if (kind === "stroke")
    return (
      <svg viewBox="0 0 15 13" className="ml-px h-[13px] w-[15px]">
        <path d="M0 1h15M0 4.500h15" stroke="currentColor" strokeWidth="1.200" />
        <path d="M0 8h15" stroke="currentColor" strokeWidth="2" />
        <path d="M0 11.800h15" stroke="currentColor" strokeWidth="2.400" />
      </svg>
    );
  return (
    <svg viewBox="0 0 18 16" className="h-[16px] w-[18px]">
      <path
        d={
          kind === "vertical"
            ? "M3 2v12M.8 4 3 1.500 5.200 4M.8 12 3 14.500 5.200 12"
            : "M1 14h15M3.500 12 1 14l2.500 2M13.500 12l2.500 2-2.500 2"
        }
        fill="none"
        stroke="currentColor"
        strokeWidth="1.200"
      />
      {kind === "vertical" ? (
        <path d="M6 0h12v4h-1.500l-.6-2.200h-2.400v11H15V14H9v-1.200h1.500v-11H8.100L7.500 4H6z" fill="currentColor" />
      ) : (
        <path d="M2 0h13v3.500h-1.500L13 1.700h-3v7.600h1.500v1.200h-6V9.300H7V1.700H4l-.5 1.800H2z" fill="currentColor" />
      )}
    </svg>
  );
}

function CharacterRow({
  icon, value, unit, icon2, value2, unit2, className,
}: {
  icon: string; value: string; unit?: string; icon2?: string; value2?: string; unit2?: string; className?: string;
}) {
  return (
    <div className={clsx("grid grid-cols-[25px_43px_37px_32px_43px_1fr] items-center whitespace-nowrap text-[#b4b4b4]", className)}>
      <TypeIcon kind={icon} />
      <button type="button" className={clsx("text-left", value === "Metrics" ? "text-[#5a5a5a]" : "text-[#3b9cf0]")}>
        {value} {unit && <span className="text-[#b0b0b0]">{unit}</span>}
      </button>
      <Down className="ml-px" />
      {icon2 && <TypeIcon kind={icon2} />}
      {value2 && (
        <button type="button" className="text-left text-[#3b9cf0]">
          {value2} {unit2 && <span className="text-[#b0b0b0]">{unit2}</span>}
        </button>
      )}
      {value2 && <Down className="ml-[2px]" />}
    </div>
  );
}

function CharacterPanel() {
  return (
    <section className="h-[201px] overflow-hidden bg-[#272727]">
      <div className="flex h-[26px] items-start pr-[5px]">
        <button type="button" className="h-[26px] w-[109px] pt-[2px] text-left">ects &amp; Presets</button>
        <button type="button" className="h-[26px] w-[81px] pt-[2px] text-left">Libraries</button>
        <button type="button" className="flex h-[26px] items-center gap-[8px] border-b-2 border-[#c8c8c8] pt-[4px] font-medium text-[#d6d6d6]">
          Character <Hamburger />
        </button>
        <span className="mt-[9px] ml-auto"><DoubleChevron /></span>
      </div>
      <div className="mt-[11px] ml-[5px] flex h-[43px]">
        <div className="flex w-[122px] flex-col gap-[6px]">
          <Dropdown label="Font family" value="Courier" className="h-[18px] font-medium" />
          <Dropdown label="Font style" value="Regular" className="h-[18px] font-medium" />
        </div>
        <div className="ml-[5px] flex w-[20px] flex-col justify-between">
          <svg viewBox="0 0 18 18" className="h-[18px] w-[18px]">
            <path d="m10 6-8 8-1 3 3-1 8-8" fill="none" stroke="currentColor" strokeWidth="1.200" />
            <path d="m8.500 4 1.500-1 1.500 1.500L14 1.500A2 2 0 0 1 17 4.500L14 7l1.200 1.500-1.200 1z" fill="currentColor" />
          </svg>
          <span className="h-[18px] border border-[#9a9a9a] bg-[linear-gradient(#000_0_50%,#fff_50%)]" />
        </div>
        <svg viewBox="0 0 44 44" className="ml-[5px] h-[44px] w-[44px]">
          <path d="M14.500 14.500h28v28h-28z" fill="#fff" stroke="#000" />
          <path d="M24 23h10v10H24z" fill="#333" stroke="#000" />
          <path d="m14 42 28-28" stroke="#d22" strokeWidth="1.500" />
          <path d="M.5.500h30v29H.5z" fill="#d31f0f" stroke="#000" />
          <path d="M1 31h11v11H1z" fill="#fff" stroke="#888" />
          <path d="m2 41 9-9" stroke="#d22" />
          <path d="M34 4.500h5v6" fill="none" stroke="#b4b4b4" strokeWidth="1.800" />
          <path d="M31 4.500 35 1v7zM39 13l-3.500-4h7z" fill="#b4b4b4" />
        </svg>
      </div>
      <div className="ml-[5px] w-[196px]">
        <div className="mt-[4px] border-t border-[#323232] pt-px pb-[6px]">
          <CharacterRow icon="size" value="148" unit="px" icon2="leading" value2="Auto" className="h-[21px]" />
          <CharacterRow icon="kerning" value="Metrics" icon2="tracking" value2="-37" className="h-[21px]" />
        </div>
        <div className="flex border-t border-[#323232] pt-[5px] pb-[8px]">
          <CharacterRow icon="stroke" value="-" unit="px" className="h-[18px] w-[82px] shrink-0" />
          <Dropdown label="Stroke order" value="" className="h-[18px] flex-1" />
        </div>
        <div className="border-t border-[#323232] pt-[2px]">
          <CharacterRow icon="vertical" value="100" unit="%" icon2="horizontal" value2="100" unit2="%" className="h-[20px]" />
          <CharacterRow icon="baseline" value="-51" unit="px" icon2="horizontal" value2="0" unit2="%" className="h-[20px]" />
        </div>
      </div>
    </section>
  );
}

function OutlineHeader() {
  return (
    <div className="grid h-[20px] grid-cols-[67px_32px_33px_222px_101px_20px_104px_136px_1fr] items-center border-y border-black bg-[#303030] text-[10px] text-[#a2a2a2]">
      <div className="flex items-center gap-[3px] pl-[4px] text-[#b4b4b4]">
        <Eye />
        <svg viewBox="0 0 13 11" className="h-[11px] w-[13px]">
          <path d="M0 3h3l4-3v11L3 8H0z" fill="currentColor" />
          <path d="M8.500 2.500q2 3 0 6M10.500 1q3 4.500 0 9" fill="none" stroke="currentColor" />
        </svg>
        <svg viewBox="0 0 12 8" className="h-[8px] w-[12px]"><circle cx="5" cy="4" r="3.500" fill="currentColor" /></svg>
        <svg viewBox="0 0 10 11" className="h-[11px] w-[10px]">
          <path d="M2.500 5V3a2.500 2.500 0 0 1 5 0v2" fill="none" stroke="currentColor" strokeWidth="1.400" />
          <path fillRule="evenodd" d="M.5 4.500h9V11h-9zM4.500 6v3.500h1V6z" fill="currentColor" />
        </svg>
      </div>
      <div className="flex h-[12px] items-center border-l border-black pl-[12px] text-[#b4b4b4]">
        <svg viewBox="0 0 13 12" className="h-[12px] w-[13px]">
          <path fillRule="evenodd" d="M1 0h5l7 7-5 5-7-6zM3 2v1.500h1.500V2z" fill="currentColor" />
        </svg>
      </div>
      <span className="h-[12px] border-l border-black pl-[5px] leading-[12px]">#</span>
      <span className="h-[12px] border-l border-black pl-[4px] leading-[12px]">Layer Name</span>
      <span className="h-[12px] border-l border-black pl-[4px] leading-[12px]">Mode</span>
      <span className="pl-[6px] leading-[12px]">T</span>
      <span className="pl-[4px] leading-[12px]">TrkMat</span>
      <div className="flex h-[12px] items-center gap-[3px] border-l border-black pl-[4px] text-[#b4b4b4]">
        <Shy />
        <Sun />
        <svg viewBox="0 0 12 11" className="h-[11px] w-[12px]"><path d="m1 1 10 9" stroke="currentColor" strokeWidth="2" strokeDasharray="2.500 1" /></svg>
        <span className="w-[12px] font-['Liberation_Serif',serif] text-[14px] leading-[12px] italic">fx</span>
        <Film />
        <Blur />
        <svg viewBox="0 0 12 12" className="h-[12px] w-[12px]">
          <circle cx="6" cy="6" r="5" fill="none" stroke="currentColor" strokeWidth="1.300" />
          <path d="M9.500 2.500a5 5 0 0 1-7 7z" fill="currentColor" />
        </svg>
        <Cube />
      </div>
      <div className="flex h-[12px] items-center border-l border-black pl-[5px]">
        <span className="w-[111px] leading-[12px]">Parent &amp; Link</span>
        <Separator />
      </div>
    </div>
  );
}

const Cell = ({ children, className }: { children?: ReactNode; className?: string }) => (
  <span className={clsx("flex h-[13px] w-[13px] items-center justify-center bg-black/35", className)}>{children}</span>
);

function LayerRow({ index, name, mode, trackMatte, selected }: {
  index: number; name: string; mode: string; trackMatte?: string; selected?: boolean;
}) {
  return (
    <div
      className={clsx(
        "grid h-[17px] grid-cols-[67px_32px_33px_222px_101px_20px_104px_136px_1fr] items-center border-b border-[#1f1f1f] text-[#b4b4b4]",
        selected ? "bg-[#484848]" : "bg-[#303030]"
      )}
    >
      <div className="flex gap-[2px] pl-[3px]">
        <Cell><Eye /></Cell>
        <Cell className="ml-[15px]" />
        <Cell />
      </div>
      <div className="flex items-center gap-[5px] pl-[5px]">
        <Down />
        <span className="h-[12px] w-[12px] bg-[#b73636]" />
      </div>
      <span className="pl-[6px] leading-[14px] font-bold">{index}</span>
      <div className="flex h-[16px] min-w-0 items-center">
        <span className="w-[18px] shrink-0 pl-[3px] font-['Liberation_Serif',serif] text-[14px] leading-[16px] font-bold">T</span>
        {selected ? (
          <input
            aria-label="Layer name"
            defaultValue={name}
            className="h-[16px] min-w-0 flex-1 border-2 border-[#a2a2a2] bg-[#464646] pl-px leading-[12px] font-bold outline-none"
          />
        ) : (
          <span className="pl-[3px] leading-[14px] font-bold">{name}</span>
        )}
      </div>
      <Dropdown label={`${name} mode`} value={mode} className="ml-[3px] h-[15px] w-[97px]" />
      <Cell className="ml-[3px]" />
      {trackMatte ? (
        <Dropdown label={`${name} track matte`} value={trackMatte} className="ml-[2px] h-[15px] w-[97px]" />
      ) : (
        <span />
      )}
      <div className="flex gap-[2px] pl-[4px]">
        <Cell><Shy /></Cell>
        <Cell><Sun className="text-[#7a7a7a]" /></Cell>
        <Cell>
          <svg viewBox="0 0 11 11" className="h-[11px] w-[11px]"><path d="M.5 10.500 10.500.500" stroke="currentColor" strokeWidth="1.600" /></svg>
        </Cell>
        <Cell className="ml-[30px]" />
        <Cell />
        <Cell />
      </div>
      <div className="flex items-center gap-[6px] pl-[5px]">
        <Spiral />
        <Dropdown label={`${name} parent`} value="None" className="h-[15px] w-[89px]" />
      </div>
    </div>
  );
}

function PropertyRow({ item }: { item: Property }) {
  if (item.expressionRow) {
    return (
      <div className="grid h-[23px] grid-cols-[67px_287px_1fr]">
        <span />
        <span className="pt-[3px] pl-[72px]">{item.name}</span>
        <div className="flex h-[15px] items-center gap-[4px] pl-[245px]">
          <IconButton label="Enable expression" className="h-[15px] w-[14px] border border-[#303030] text-[#2f8dee]">
            <svg viewBox="0 0 9 7" className="h-[7px] w-[9px]"><path d="M0 1h9M0 5.500h9" stroke="currentColor" strokeWidth="2" /></svg>
          </IconButton>
          <IconButton label="Expression graph"><Graph /></IconButton>
          <IconButton label="Expression pick whip" className="ml-px"><Spiral /></IconButton>
          <IconButton label="Expression language"><CirclePlay /></IconButton>
        </div>
      </div>
    );
  }

  return (
    <div className="grid h-[17px] grid-cols-[67px_287px_225px_136px_1fr] items-center border-b border-[#1f1f1f] leading-[16px]">
      <div className="flex items-center pl-[3px]">
        {item.eye && <Cell className="text-[#d0d0d0]"><Eye /></Cell>}
        {item.keys && (
          <svg viewBox="0 0 38 10" className="ml-[3px] h-[10px] w-[38px]">
            <path d="M6 0v10L0 5zM31 0v10l6-5z" fill="#c4c4c4" />
            <path d="m19 1 4 4-4 4-4-4z" fill="#3a3a3a" stroke="#b4b4b4" strokeWidth="1.200" />
          </svg>
        )}
      </div>
      <div className={clsx("flex h-full items-center", indents[item.level])}>
        <span className="flex w-[12px] shrink-0 justify-center">{item.open && <Down />}</span>
        {item.watch && (
          <span className="ml-[4px] shrink-0"><Stopwatch on={item.watch === "on"} /></span>
        )}
        {item.watch === "on" && <span className="ml-[5px] shrink-0"><Graph /></span>}
        <span
          className={clsx(
            "whitespace-nowrap",
            item.watch ? "ml-[3px] pl-[3px]" : "ml-[4px] pl-[3px]",
            item.selected && "flex-1 self-stretch bg-[#4b4b4b]"
          )}
        >
          {item.name}
        </span>
      </div>
      <span />
      <div className="flex items-center pl-[5px]">
        {item.value && (
          <button type="button" className={item.expression ? "text-[#d33c32]" : "text-[#3b9cf0]"}>
            {item.value}
            {item.unit && <span className="text-[#b4b4b4]">{item.unit}</span>}
          </button>
        )}
        {item.action && (
          <button type="button" className="ml-auto flex items-center gap-px pr-[4px]">
            {item.action}
            <CirclePlay />
          </button>
        )}
      </div>
      <span className="pl-[18px]">{item.pickWhip && <Spiral />}</span>
    </div>
  );
}

function TrackRow({ item }: { item: Property }) {
  if (item.expressionRow) {
    return (
      <div className="relative z-10 h-[23px] bg-[#343434] pl-px">
        thisComp.layer("This is a type writer").transform.position
      </div>
    );
  }
  return (
    <div className="relative h-[17px] border-b border-[#1f1f1f]">
      {item.beam && (
        <svg viewBox="0 0 7 12" className={clsx("absolute top-[2px] h-[12px] w-[7px] -translate-x-[3px]", item.selected ? "text-[#2f8dee]" : "text-[#b4b4b4]")} style={{ left: at(playhead) }}>
          <path d="M0 .6h7M0 11.400h7" stroke="currentColor" strokeWidth="1.200" />
          <path d="M3.500 0v12" stroke="currentColor" strokeWidth="3" />
        </svg>
      )}
      {item.keys?.map((key) => (
        <svg key={key} viewBox="0 0 9 9" className="absolute top-[4px] h-[9px] w-[9px] -translate-x-1/2" style={{ left: at(key) }}>
          <path d="M4.500 0 0 4.500 4.500 9z" fill="#d0d0d0" />
          <path d="m4.500 0 4.500 4.500L4.500 9z" fill="#8a8a8a" />
        </svg>
      ))}
    </div>
  );
}

function Ruler() {
  return (
    <div className="pt-[4px] text-[10px] text-[#a8a8a8]">
      <div className="flex h-[10px] border-y border-black bg-[#666]">
        <span className="w-[7px] rounded-l-full border-r border-black bg-[#2f8dee]" />
        <span className="flex-1" />
        <span className="w-[6px] rounded-r-full border-l border-black bg-[#2f8dee]" />
      </div>
      <div className="relative h-[19px] overflow-hidden">
        {ticks.map((tick, i) => (
          <span key={tick} className="absolute top-0 flex h-full -translate-x-1/2 flex-col items-center justify-between leading-[13px]" style={{ left: at(i / 2) }}>
            {tick}
            <span className="h-[5px] w-px bg-[#9a9a9a]" />
          </span>
        ))}
      </div>
      <div className="flex h-[17px] border-y border-black bg-[#1d1d1d]">
        <span className="ml-px w-[6px] rounded-l-[3px] border-r border-black bg-[#2f8dee]" />
        <span className="w-[780px] max-w-[97%] bg-[#606060]" />
        <span className="w-[6px] rounded-r-[3px] border-l border-black bg-[#2f8dee]" />
      </div>
      <div className="relative h-[4px] border-b border-black bg-[#242424]">
        <span className="absolute top-0 h-[3px] w-[3px] bg-[#18b41c]" style={{ left: at(playhead) }} />
      </div>
    </div>
  );
}

function Timeline() {
  return (
    <section className="ml-[2px] flex flex-1 flex-col border border-[#2a7fdc] bg-[#272727]">
      <h2 className="flex h-[28px] items-center gap-[9px] pb-[3px] pl-[9px] font-medium text-[#c8c8c8]">
        <Cross />
        <Swatch className="bg-[#ab9873]" />
        Comp 1
        <Hamburger />
      </h2>
      <div className="flex flex-1">
        <div className="flex w-[849px] shrink-0 flex-col border-r border-black">
          <div className="flex h-[34px] items-start">
            <div className="w-[101px] pl-[9px]">
              <p className="h-[19px] text-[16px] leading-[18px] font-bold text-[#3b9cf0]">0;00;01;20</p>
              <p className="text-[10px] leading-[12px] whitespace-nowrap text-[#2478c4]">00050 (29.97 fps)</p>
            </div>
            <label className="mt-[6px] flex h-[19px] w-[546px] items-center rounded-[2px] border border-[#2f2f2f] bg-[#141414] pl-[5px]">
              <svg viewBox="0 0 18 12" className="h-[12px] w-[18px] shrink-0 text-[#b4b4b4]">
                <circle cx="7" cy="4.500" r="3.600" fill="none" stroke="currentColor" strokeWidth="1.200" />
                <path d="m4.500 7.300-4 4" stroke="currentColor" strokeWidth="1.500" />
                <path d="M11 8h6l-3 3z" fill="currentColor" />
              </svg>
              <input aria-label="Search layers" className="w-full bg-transparent outline-none" />
            </label>
            <div className="mt-[8px] ml-[14px] flex h-[16px] items-center text-[#b4b4b4]">
              <IconButton label="Mini flowchart" className="w-[18px]">
                <svg viewBox="0 0 17 13" className="h-[13px] w-[17px]">
                  <path d="M0 2h9v2H0z" fill="currentColor" />
                  <path d="M9 3h3M6 3v6h5" fill="none" stroke="currentColor" strokeWidth="1.200" />
                  <path d="M11 1h5v4h-5zM11 7h4v3h-4zM13 11h4l-2 2z" fill="currentColor" />
                </svg>
              </IconButton>
              <IconButton label="Draft 3D" className="ml-[15px] w-[18px]">
                <svg viewBox="0 0 18 17" className="h-[17px] w-[18px]">
                  <path d="M5 0v9M.5 4.500h9M2 1.500l6 6M8 1.500l-6 6" stroke="currentColor" strokeWidth="1.200" />
                  <path d="m12 5.500 5 2v6l-5 3-5-3v-6zm-5 2 5 2.500 5-2.500M12 10v6.500" fill="#272727" stroke="currentColor" strokeWidth="1.200" />
                </svg>
              </IconButton>
              <IconButton label="Hide shy layers" className="ml-[16px] w-[18px]">
                <svg viewBox="0 0 17 13" className="h-[13px] w-[17px]">
                  <path d="M0 7h17v6H0z" fill="#777" />
                  <path d="M2 7a6.500 6 0 0 1 13 0z" fill="currentColor" />
                  <path d="M8.500 2v5M6 5h5" stroke="#272727" strokeWidth="1" />
                  <path d="M7.500 6h2v6h-2z" fill="currentColor" />
                </svg>
              </IconButton>
              <IconButton label="Frame blending" className="ml-[8px] w-[18px]"><Film className="h-[14px] w-[15px]" /></IconButton>
              <IconButton label="Motion blur" className="ml-[8px] w-[18px]"><Blur className="h-[15px] w-[15px]" /></IconButton>
              <IconButton label="Graph editor" className="ml-[16px] w-[18px]">
                <svg viewBox="0 0 17 16" className="h-[16px] w-[17px]">
                  <path d="M1 3h15v12H1zM4 0v5M8 1v3M13 0v5M3 6q4 0 5 3t5 3" fill="none" stroke="currentColor" strokeWidth="1.300" />
                </svg>
              </IconButton>
            </div>
          </div>
          <OutlineHeader />
          <LayerRow index={1} name="Dingbat n" mode="Difference" />
          {firstLayer.map((item) => (
            <PropertyRow key={item.name} item={item} />
          ))}
          <LayerRow index={2} name="This is a type writer" mode="Normal" trackMatte="None" selected />
          {secondLayer.map((item) => (
            <PropertyRow key={item.name} item={item} />
          ))}
        </div>

        <div className="relative flex min-w-0 flex-1 flex-col">
          <Ruler />
          <div className="flex-1 bg-[linear-gradient(90deg,#272727_0_0.9%,#333_0.9%_97.2%,#272727_97.2%)]">
            <div className="h-[17px] border-b border-[#1f1f1f] bg-[#303030] pr-[12px] pl-[3px]">
              <div className="h-full border-l border-[#a05050] bg-[#7c3a39]" />
            </div>
            {firstLayer.map((item) => (
              <TrackRow key={item.name} item={item} />
            ))}
            <div className="h-[17px] border-b border-[#1f1f1f] bg-[#4b4b4b] pr-[8px] pl-[7px]">
              <div className="h-full border-t border-[#d48888] bg-[linear-gradient(#b04b4b,#994343)]" />
            </div>
            {secondLayer.map((item) => (
              <TrackRow key={item.name} item={item} />
            ))}
          </div>
          <span className="absolute top-[4px] bottom-0 z-20 w-px bg-[#2f8dee]" style={{ left: at(playhead) }} />
          <svg viewBox="0 0 13 14" className="absolute top-[19px] z-20 h-[14px] w-[13px] -translate-x-[6px]" style={{ left: at(playhead) }}>
            <path d="M1 0h11v8l-5.500 6L1 8z" fill="#2f8dee" />
            <path d="M6.500 7v7" stroke="#123" />
          </svg>
        </div>

        <div className="flex w-[17px] shrink-0 flex-col items-center gap-[7px] border-l border-[#1f1f1f] bg-[#242424] pt-[36px] text-[#b4b4b4]">
          <svg viewBox="0 0 11 15" className="h-[15px] w-[11px]"><path d="M0 0h11v10l-5.500 5L0 10z" fill="currentColor" /></svg>
          <svg viewBox="0 0 14 14" className="h-[13px] w-[14px]">
            <path d="M7 2h7v9H8z" fill="currentColor" />
            <circle cx="7" cy="9" r="3" fill="#242424" stroke="currentColor" strokeWidth="1.500" />
            <path d="m0 8 8-8v5" fill="none" stroke="currentColor" strokeWidth="1.300" />
          </svg>
        </div>
      </div>

      <footer className="flex h-[17px] border-t-2 border-black bg-[#222]">
        <div className="flex w-[957px] items-center bg-[#272727] pb-px">
          <div className="flex w-[854px] gap-[6px] pl-[4px] text-[#2f8dee]">
            <IconButton label="Layer switches">
              <svg viewBox="0 0 12 12" className="h-[12px] w-[12px]">
                <path d="M1 7V1h6M3 9V3h6M5 5h6v6H5zM8 6.500v3M6.500 8h3" fill="none" stroke="currentColor" strokeWidth="1.200" />
              </svg>
            </IconButton>
            <IconButton label="Transfer controls">
              <svg viewBox="0 0 12 12" className="h-[12px] w-[12px]">
                <circle cx="4.500" cy="4.500" r="3.700" fill="none" stroke="currentColor" strokeWidth="1.300" />
                <path d="M5 5h6v6H5z" fill="none" stroke="currentColor" strokeWidth="1.300" />
              </svg>
            </IconButton>
            <IconButton label="In and out columns">
              <svg viewBox="0 0 12 12" className="h-[12px] w-[12px] text-[#b4b4b4]">
                <path d="M5 0v12H2.500V8L.5 6l2-2V0zM7 0v12h2.500V8l2-2-2-2V0z" fill="currentColor" />
                <path d="M6 0v12" stroke="#777" strokeWidth="2" />
              </svg>
            </IconButton>
          </div>
          <svg viewBox="0 0 9 5" className="h-[5px] w-[9px]"><path d="M0 5 3 2l1 1 2-3 3 5z" fill="#b4b4b4" /></svg>
          <input
            type="range"
            aria-label="Time zoom"
            min="0"
            max="100"
            defaultValue="0"
            className="mx-[11px] h-[10px] w-[50px] appearance-none bg-[linear-gradient(#4a4a4a,#4a4a4a)] bg-[length:100%_2px] bg-center bg-no-repeat [&::-webkit-slider-thumb]:h-[10px] [&::-webkit-slider-thumb]:w-[10px] [&::-webkit-slider-thumb]:appearance-none [&::-webkit-slider-thumb]:rounded-full [&::-webkit-slider-thumb]:border-2 [&::-webkit-slider-thumb]:border-[#b4b4b4] [&::-webkit-slider-thumb]:bg-[#272727]"
          />
          <svg viewBox="0 0 16 7" className="h-[7px] w-[16px]"><path d="M0 7 5 1l1 1-4 5zM4 7l6-7 6 7z" fill="#b4b4b4" /></svg>
        </div>
      </footer>
    </section>
  );
}

export default function App() {
  return (
    <div className="flex min-h-screen flex-col bg-[#161616] pb-px font-['Noto_Sans_CJK_SC',sans-serif] text-[11px] leading-[16px] text-[#b2b2b2]">
      <MenuBar />
      <ToolBar />
      <main className="flex flex-1 flex-col gap-[4px] pt-[4px]">
        <div className="flex gap-[4px]">
          <EffectControls />
          <Composition />
          <aside className="flex w-[306px] shrink-0 flex-col gap-[4px]">
            <InfoPanel />
            <PreviewPanel />
            <CharacterPanel />
            <section className="h-[28px] bg-[#272727]">
              <h2 className="flex h-full items-center gap-[8px] pl-[12px] font-medium text-[#d6d6d6]">
                Paragraph <Hamburger />
              </h2>
            </section>
          </aside>
        </div>
        <Timeline />
      </main>
    </div>
  );
}
